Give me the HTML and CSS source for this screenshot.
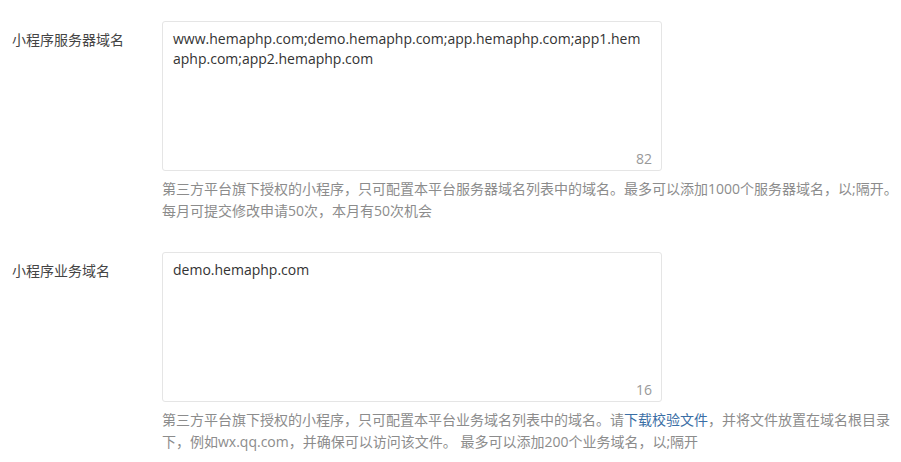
FILE: index.html
```html
<!DOCTYPE html>
<html lang="zh-CN">
<head>
    <meta charset="UTF-8">
    <meta name="viewport" content="width=device-width, initial-scale=1.0">
    <title>小程序域名设置</title>
    <link rel="stylesheet" href="styles.css">
</head>
<body>
    <form id="domainForm">
        <div class="form-row">
            <label class="form-label" for="serverDomain">小程序服务器域名</label>
            <div class="form-field">
                <div class="textarea-wrap">
                    <textarea id="serverDomain" class="domain-input">www.hemaphp.com;demo.hemaphp.com;app.hemaphp.com;app1.hemaphp.com;app2.hemaphp.com</textarea>
                    <span class="char-count" data-for="serverDomain">82</span>
                </div>
                <p class="help-text">第三方平台旗下授权的小程序，只可配置本平台服务器域名列表中的域名。最多可以添加1000个服务器域名，以;隔开。<br>每月可提交修改申请50次，本月有50次机会</p>
            </div>
        </div>
        <div class="form-row">
            <label class="form-label" for="webviewDomain">小程序业务域名</label>
            <div class="form-field">
                <div class="textarea-wrap">
                    <textarea id="webviewDomain" class="domain-input">demo.hemaphp.com</textarea>
                    <span class="char-count" data-for="webviewDomain">16</span>
                </div>
                <p class="help-text">第三方平台旗下授权的小程序，只可配置本平台业务域名列表中的域名。请<a href="#" class="help-link">下载校验文件</a>，并将文件放置在域名根目录下，例如wx.qq.com，并确保可以访问该文件。 最多可以添加200个业务域名，以;隔开</p>
            </div>
        </div>
    </form>

    <script>
        document.querySelectorAll('.domain-input').forEach(function (input) {
            const counter = document.querySelector('.char-count[data-for="' + input.id + '"]');
            input.addEventListener('input', function () {
                counter.textContent = input.value.length;
            });
        });
    </script>
</body>
</html>
```

FILE: styles.css
```css
body {
    margin: 0;
    font-family: "Open Sans", "Noto Sans CJK SC", sans-serif;
    font-size: 14px;
    color: #333;
    background: #fff;
}
#domainForm {
    padding-top: 21px;
}
.form-row {
    display: flex;
    margin-bottom: 30px;
}
.form-label {
    box-sizing: border-box;
    width: 162px;
    padding: 9px 0 0 12px;
    line-height: 20px;
    color: #444;
}
.form-field {
    flex: 1;
}
.textarea-wrap {
    position: relative;
    width: 500px;
}
.domain-input {
    display: block;
    box-sizing: border-box;
    width: 500px;
    height: 150px;
    margin: 0;
    padding: 7px 16px 7px 10px;
    border: 1px solid #e5e5e5;
    border-radius: 3px;
    font-family: inherit;
    font-size: 14px;
    line-height: 20px;
    color: #333;
    resize: none;
    outline: none;
}
.char-count {
    position: absolute;
    right: 10px;
    bottom: 2px;
    line-height: 20px;
    color: #999;
}
.help-text {
    margin: 7px 0 0;
    line-height: 22px;
    color: #8c8c8c;
}
.help-link {
    color: #3a6ea5;
    text-decoration: none;
}
```
